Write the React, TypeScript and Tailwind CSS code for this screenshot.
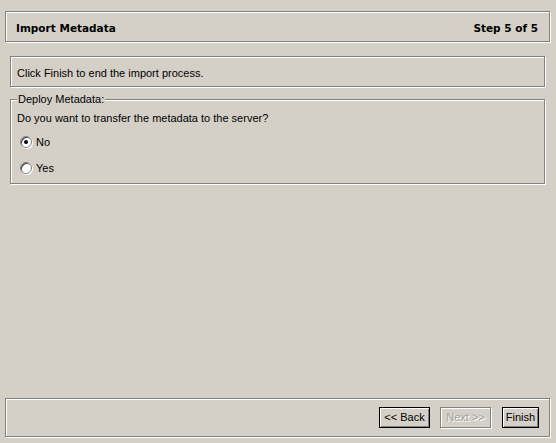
const ETCHED = 'border border-[#808080] shadow-[inset_1px_1px_0_#ffffff,1px_1px_0_#ffffff]'

function Radio({ label, checked }: { label: string; checked?: boolean }) {
  return (
    <label className="flex items-center gap-[3px] h-[26px]">
      <span className="relative w-[12px] h-[12px] rounded-full bg-white border border-[#808080] shadow-[inset_1px_1px_0_#404040,1px_1px_0_#ffffff] flex items-center justify-center">
        {checked && <span className="w-[4px] h-[4px] rounded-full bg-black" />}
      </span>
      <span className="ml-[1px]">{label}</span>
    </label>
  )
}

export default function App() {
  return (
    <div
      className="w-[556px] h-[443px] bg-[#d4d0c8] flex flex-col text-[11px] text-black overflow-hidden"
      style={{ fontFamily: '"Liberation Sans", Arial, sans-serif' }}
    >
      {/* Header */}
      <div
        className={`mt-[11px] ml-[5px] w-[545px] h-[31px] flex items-center justify-between pl-[10px] pr-[11px] pt-[5px] text-[10.5px] font-bold ${ETCHED}`}
        style={{ fontFamily: '"DejaVu Sans", Verdana, sans-serif' }}
      >
        <span>Import Metadata</span>
        <span>Step 5 of 5</span>
      </div>

      {/* Body */}
      <div className="flex-1 flex flex-col px-[10px] pt-[14px]">
        <div className={`w-[535px] h-[31px] flex items-center px-[6px] pt-[3px] ${ETCHED}`}>
          Click Finish to end the import process.
        </div>

        <div className={`relative mt-[12px] w-[535px] h-[85px] px-[6px] pt-[10px] ${ETCHED}`}>
          <span className="absolute -top-[7px] left-[6px] px-[1px] bg-[#d4d0c8] leading-[13px]">Deploy Metadata:</span>
          <div className="h-[17px] flex items-center">Do you want to transfer the metadata to the server?</div>
          <div className="pl-[3px] mt-[2px]">
            <Radio label="No" checked />
            <Radio label="Yes" />
          </div>
        </div>
      </div>

      {/* Footer */}
      <div className={`mb-[6px] ml-[5px] w-[545px] h-[39px] flex items-center justify-end gap-[10px] pr-[10px] ${ETCHED}`}>
        <button className="h-[21px] w-[51px] border border-black bg-[#d4d0c8] shadow-[inset_1px_1px_0_#ffffff,inset_-1px_-1px_0_#808080] flex items-center justify-center">
          &lt;&lt; Back
        </button>
        <button
          disabled
          className="h-[21px] w-[51px] border border-[#808080] bg-[#d4d0c8] shadow-[inset_1px_1px_0_#ffffff,1px_1px_0_#ffffff] text-[#a0a0a0] [text-shadow:1px_1px_0_#ffffff] flex items-center justify-center"
        >
          Next &gt;&gt;
        </button>
        <button className="h-[21px] w-[37px] ml-[1px] border border-black bg-[#d4d0c8] shadow-[inset_1px_1px_0_#ffffff,inset_-1px_-1px_0_#808080] flex items-center justify-center">
          Finish
        </button>
      </div>
    </div>
  )
}
